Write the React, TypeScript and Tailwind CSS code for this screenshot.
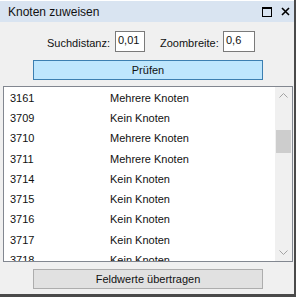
const rows: [string, string][] = [
  ["3161", "Mehrere Knoten"],
  ["3709", "Kein Knoten"],
  ["3710", "Mehrere Knoten"],
  ["3711", "Mehrere Knoten"],
  ["3714", "Kein Knoten"],
  ["3715", "Kein Knoten"],
  ["3716", "Kein Knoten"],
  ["3717", "Kein Knoten"],
  ["3718", "Kein Knoten"],
];

export default function App() {
  return (
    <div
      className="w-[296px] h-[297px] bg-[#f0f0f0] border-r-2 border-b-[3px] border-[#4a4a4a] flex flex-col text-[11px] text-[#111] overflow-hidden"
      style={{ fontFamily: '"Liberation Sans", Arial, sans-serif' }}
    >
      {/* title bar */}
      <div className="h-[22px] bg-[#d9e4f1] border-t border-white flex items-center justify-between pl-2 pr-[4px] shrink-0">
        <span className="text-[12px]">Knoten zuweisen</span>
        <div className="flex items-center gap-[9px]">
          <svg width="10" height="10" viewBox="0 0 10 10">
            <rect x="0.5" y="0.5" width="9" height="9" fill="none" stroke="#000" />
            <line x1="0" y1="1.5" x2="10" y2="1.5" stroke="#000" />
          </svg>
          <svg width="9" height="9" viewBox="0 0 9 9">
            <path d="M1 1 L8 8 M8 1 L1 8" stroke="#000" strokeWidth="1.6" />
          </svg>
        </div>
      </div>

      {/* parameters */}
      <div className="flex items-center pl-[47px] mt-[9px] h-[21px] shrink-0">
        <span className="w-[68px] mt-[3px]">Suchdistanz:</span>
        <div className="w-[30px] h-[21px] bg-white border border-[#7a7a7a] px-[2px] pt-[1px] leading-[14px]">0,01</div>
        <span className="w-[78px] pl-[15px] mt-[3px]">Zoombreite:</span>
        <div className="w-[32px] h-[21px] bg-white border border-[#7a7a7a] px-[2px] pt-[1px] leading-[14px]">0,6</div>
      </div>

      <button className="mt-[8px] ml-[33px] w-[230px] h-[20px] bg-[#bee6fd] border border-[#3c7fb1] shrink-0">
        Prüfen
      </button>

      {/* result list */}
      <div className="mt-[6px] ml-[3px] w-[290px] h-[176px] bg-white border border-[#828790] flex shrink-0">
        <div className="flex-1 overflow-hidden pt-[1px]">
          {rows.map(([id, status]) => (
            <div key={id} className="h-[20.25px] flex items-center">
              <span className="w-[106px] pl-[6px]">{id}</span>
              <span>{status}</span>
            </div>
          ))}
        </div>
        <div className="w-[17px] bg-[#f0f0f0] flex flex-col items-center">
          <div className="h-[17px] flex items-center justify-center">
            <svg width="9" height="5" viewBox="0 0 9 5">
              <path d="M0.5 4.5 L4.5 0.5 L8.5 4.5" fill="none" stroke="#a3a3a3" />
            </svg>
          </div>
          <div className="mt-[26px] w-[15px] h-[23px] bg-[#cdcdcd]" />
          <div className="flex-1" />
          <div className="h-[17px] flex items-center justify-center">
            <svg width="9" height="5" viewBox="0 0 9 5">
              <path d="M0.5 0.5 L4.5 4.5 L8.5 0.5" fill="none" stroke="#a3a3a3" />
            </svg>
          </div>
        </div>
      </div>

      <button className="mt-[7px] ml-[33px] w-[230px] h-[20px] bg-[#e1e1e1] border border-[#adadad] shrink-0">
        Feldwerte übertragen
      </button>
    </div>
  );
}
